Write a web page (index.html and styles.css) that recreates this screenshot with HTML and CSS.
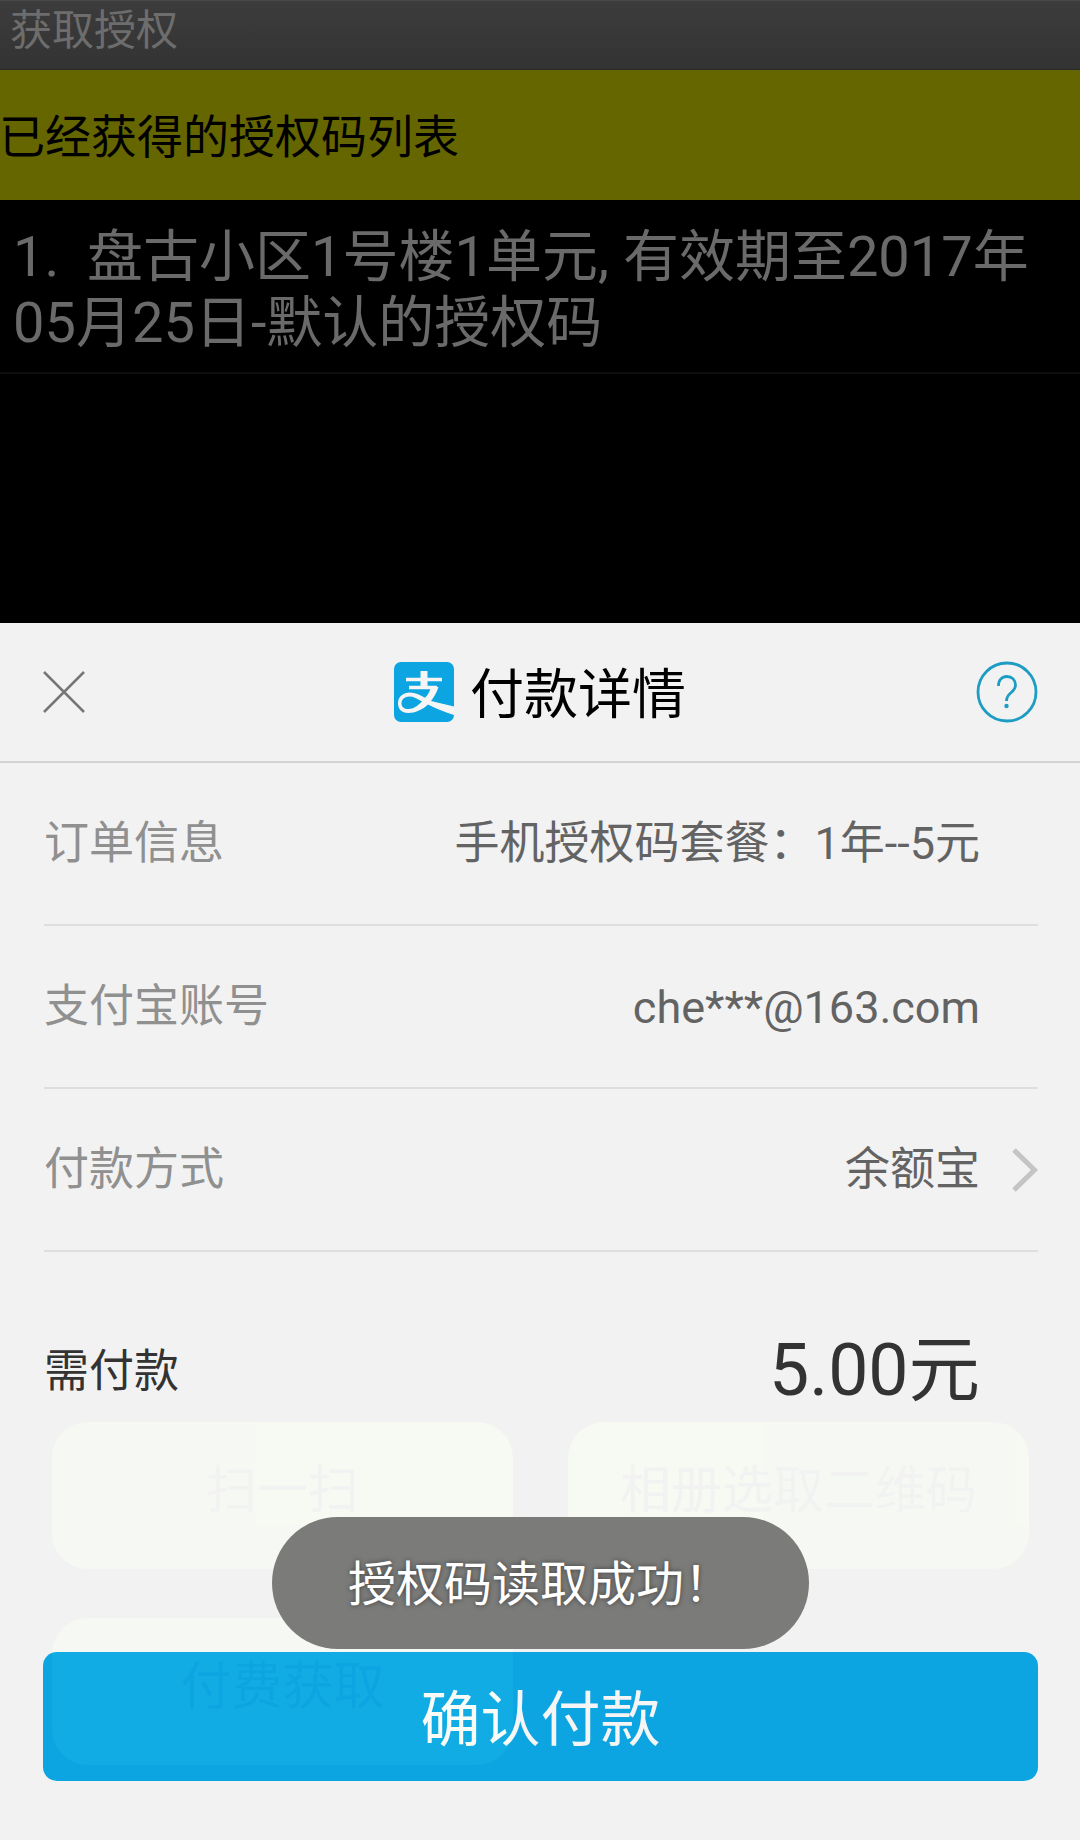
FILE: index.html
```html
<!DOCTYPE html>
<html lang="zh-CN">
<head>
  <meta charset="UTF-8">
  <title>获取授权</title>
  <link rel="stylesheet" href="styles.css">
</head>
<body>
  <div class="screen">
    <div class="app">
      <div class="title-bar">获取授权</div>
      <div class="list-title">已经获得的授权码列表</div>
      <div class="list-item">1.&nbsp; 盘古小区1号楼1单元, 有效期至2017年05月25日-默认的授权码</div>
      <div class="actions">
        <button>扫一扫</button>
        <button>相册选取二维码</button>
        <button>付费获取</button>
      </div>
    </div>

    <div class="sheet">
      <div class="sheet-header">
        <svg class="close" width="42" height="42" viewBox="0 0 42 42">
          <path d="M1 1L41 41M41 1L1 41"/>
        </svg>
        <div class="sheet-title">
          <svg class="logo" width="60" height="60" viewBox="0 0 60 60">
            <rect width="60" height="60" rx="7" fill="#0dacec"/>
            <path class="line" d="M12 17.500H48M15 25.500H43"/>
            <path class="line thick" d="M30 9V25"/>
            <path class="fill" d="M37 25H44.500C42.500 31 40 35 37 39L60 44.500V53C52 50.500 43 47 34 42.500C28 48 21 51 14.500 51C7 51 4 46.500 4 41.500C4 34.500 9 30.500 16 30.500C21 30.500 26 33 31 35.700C34 33 36 29 37 25ZM28 39.500C23 36.500 19.500 34.500 15.500 34.500C10.500 34.500 7.500 37.500 7.500 41.500C7.500 45 10 47 14.500 47C19.500 47 24 43.500 28 39.500Z"/>
          </svg>
          <span>付款详情</span>
        </div>
        <svg class="help" width="62" height="62" viewBox="0 0 62 62">
          <circle cx="31" cy="31" r="29"/>
          <path d="M22.500 25C22.500 19 26 15.500 31 15.500C36 15.500 39.500 19 39.500 24C39.500 32 30.500 31 30.500 40"/>
          <circle class="dot" cx="30.500" cy="45" r="2.200"/>
        </svg>
      </div>
      <div class="row">
        <span class="label">订单信息</span>
        <span class="value">手机授权码套餐：1年--5元</span>
      </div>
      <div class="row">
        <span class="label">支付宝账号</span>
        <span class="value email">che***@163.com</span>
      </div>
      <div class="row">
        <span class="label">付款方式</span>
        <span class="value">余额宝</span>
        <svg class="arrow" width="26" height="44" viewBox="0 0 26 44">
          <path d="M2 2L22.500 22L2 42"/>
        </svg>
      </div>
      <div class="total">
        <span>需付款</span>
        <span class="amount">5.00元</span>
      </div>
      <button class="confirm">确认付款</button>
    </div>

    <div class="toast">授权码读取成功！</div>
  </div>
</body>
</html>
```
FILE: styles.css
```css
* {
  box-sizing: border-box;
}
body {
  margin: 0;
  background: #000;
  font-family: Roboto, "Noto Sans CJK SC", sans-serif;
}
button {
  border: none;
  font-family: inherit;
}
.screen {
  position: relative;
  width: 1080px;
  height: 1840px;
  overflow: hidden;
}

/* page behind the sheet */
.app {
  display: flex;
  flex-direction: column;
  height: 100%;
  background: #000;
}
.title-bar {
  height: 70px;
  padding-left: 10px;
  border-top: 1px solid #484848;
  border-bottom: 1px solid #2b2b2b;
  background: linear-gradient(#3c3c3c, #333);
  color: #6d6d6d;
  font-size: 42px;
  line-height: 60px;
}
.list-title {
  height: 130px;
  background: #666600;
  color: #000;
  font-size: 46px;
  line-height: 134px;
  text-indent: -1px;
}
.list-item {
  height: 174px;
  padding: 24px 14px 0 13px;
  border-bottom: 2px solid #0e0e0e;
  color: #6a6a6a;
  font-size: 56px;
  line-height: 66px;
}
.actions {
  display: grid;
  grid-template-columns: 461px 461px;
  gap: 49px 55px;
  margin-top: auto;
  padding: 0 52px 75px;
}
.actions button {
  height: 147px;
  padding: 0 0 20px;
  border-radius: 36px;
  background: #76c019;
  color: #000;
  font-size: 51px;
}

/* payment sheet */
.sheet {
  position: absolute;
  left: 0;
  right: 0;
  bottom: 0;
  height: 1217px;
  padding: 0 42px 0 44px;
  background: #fcfcfc;
  opacity: 0.96;
}
.sheet-header {
  display: flex;
  align-items: center;
  justify-content: space-between;
  height: 140px;
  margin: 0 -42px 0 -44px;
  padding: 0 42px 0 43px;
  border-bottom: 2px solid #dcdcdc;
}
.sheet-title {
  display: flex;
  align-items: center;
  gap: 16px;
  margin-left: 19px;
  color: #000;
  font-size: 54px;
}
.sheet-title span {
  padding-top: 7px;
  line-height: 64px;
}
.close {
  fill: none;
  stroke: #7c7c7c;
  stroke-width: 2.5;
}
.logo .line {
  stroke: #fff;
  stroke-width: 3.5;
}
.logo .thick {
  stroke-width: 7;
}
.logo .fill {
  fill: #fff;
}
.help {
  fill: none;
  stroke: #1fa3cc;
  stroke-width: 2.8;
}
.help .dot {
  fill: #1fa3cc;
  stroke: none;
}
.row {
  display: flex;
  align-items: center;
  height: 163px;
  border-bottom: 2px solid #e8e8e8;
  font-size: 45px;
}
.label {
  flex: 1;
  padding-bottom: 9px;
  color: #969696;
}
.value {
  margin-right: 58px;
  padding-bottom: 9px;
  color: #686868;
}
.email {
  padding: 2px 0 0;
}
.arrow {
  margin-left: -26px;
  fill: none;
  stroke: #ccc;
  stroke-width: 5;
}
.total {
  display: flex;
  align-items: center;
  justify-content: space-between;
  height: 236px;
  padding-right: 58px;
  color: #363636;
  font-size: 45px;
}
.total span {
  padding-bottom: 6px;
}
.total .amount {
  padding-bottom: 13px;
  font-size: 71.500px;
}
.confirm {
  display: block;
  width: 995px;
  height: 129px;
  margin: 164px 0 0 -1px;
  padding-bottom: 6px;
  border-radius: 14px;
  background: #0dacec;
  color: #fff;
  font-size: 60px;
}

.toast {
  position: absolute;
  left: 272px;
  top: 1517px;
  width: 537px;
  height: 132px;
  padding-left: 76px;
  border-radius: 66px;
  background: #7b7b7a;
  color: #fff;
  font-size: 48px;
  line-height: 136px;
  white-space: nowrap;
  text-shadow: 0 0 5px rgba(0, 0, 0, 0.5);
}
```
